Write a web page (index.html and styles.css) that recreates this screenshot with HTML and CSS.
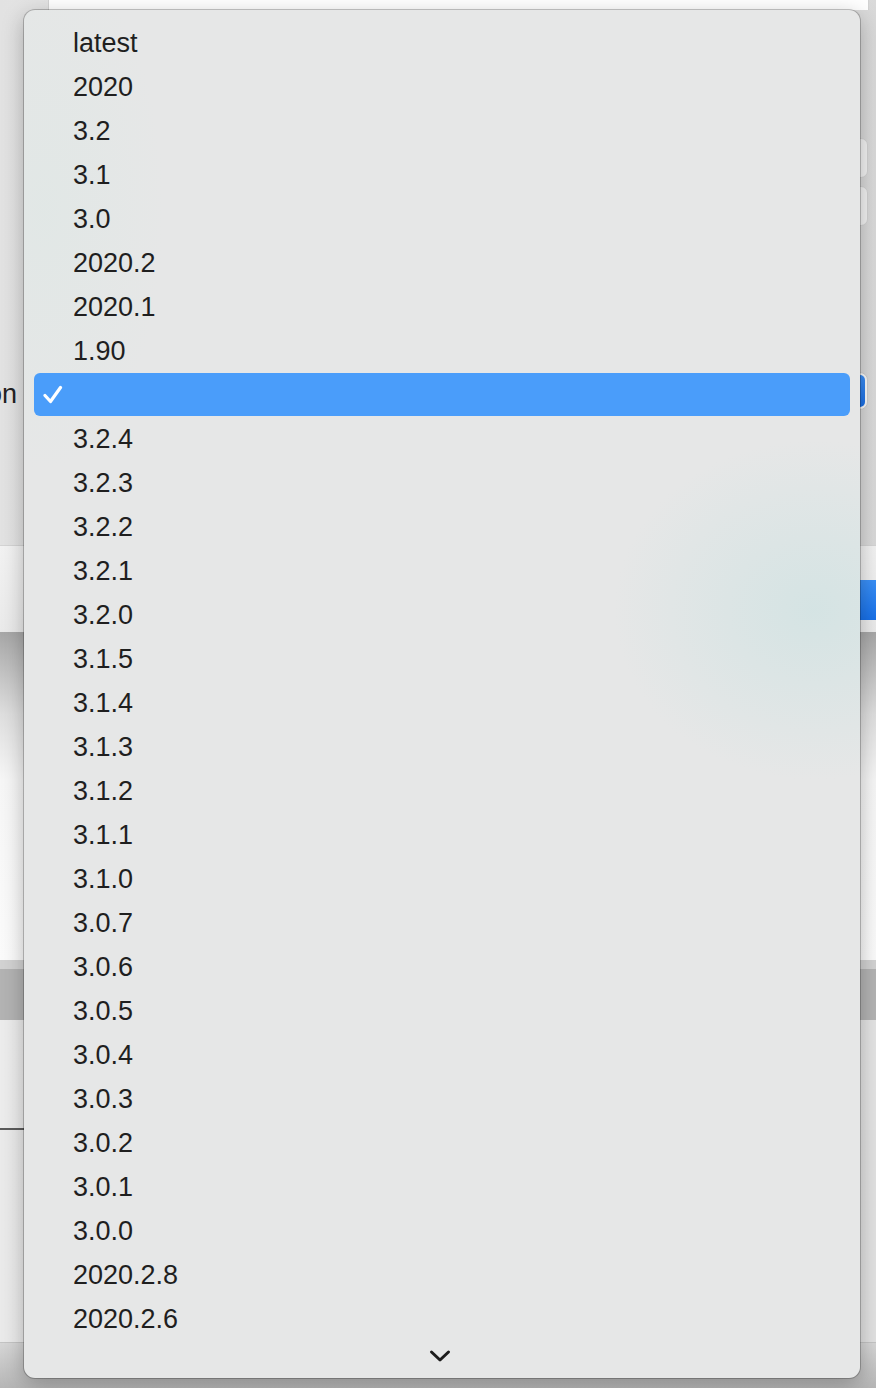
FILE: index.html
```html
<!DOCTYPE html>
<html lang="en">
<head>
<meta charset="utf-8">
<title>Version menu</title>
<link rel="stylesheet" href="styles.css">
</head>
<body>
<div class="window">
  <div class="top-panel"></div>
  <div class="form">
    <div class="field"></div>
    <div class="field"></div>
    <div class="popup-row">
      <div class="label"><span>Version</span></div>
      <div class="popup"><div class="popup-arrow"></div></div>
    </div>
  </div>
  <div class="footer"><div class="primary-btn"></div></div>
</div>
<div class="desk">
  <div class="shade"></div>
  <div class="band"></div>
  <div class="pane"><div class="pane-left"></div></div>
  <div class="pane2"></div>
  <div class="bottom"></div>
</div>

<div class="menu">
  <div class="item">latest</div>
  <div class="item">2020</div>
  <div class="item">3.2</div>
  <div class="item">3.1</div>
  <div class="item">3.0</div>
  <div class="item">2020.2</div>
  <div class="item">2020.1</div>
  <div class="item">1.90</div>
  <div class="item selected">
    <svg class="check" width="22" height="20" viewBox="0 0 22 20"><path d="M2 10.5 L7.5 16.5 L17.5 2.5" fill="none" stroke="#fff" stroke-width="3.2" stroke-linecap="round" stroke-linejoin="round"/></svg>
  </div>
  <div class="item">3.2.4</div>
  <div class="item">3.2.3</div>
  <div class="item">3.2.2</div>
  <div class="item">3.2.1</div>
  <div class="item">3.2.0</div>
  <div class="item">3.1.5</div>
  <div class="item">3.1.4</div>
  <div class="item">3.1.3</div>
  <div class="item">3.1.2</div>
  <div class="item">3.1.1</div>
  <div class="item">3.1.0</div>
  <div class="item">3.0.7</div>
  <div class="item">3.0.6</div>
  <div class="item">3.0.5</div>
  <div class="item">3.0.4</div>
  <div class="item">3.0.3</div>
  <div class="item">3.0.2</div>
  <div class="item">3.0.1</div>
  <div class="item">3.0.0</div>
  <div class="item">2020.2.8</div>
  <div class="item">2020.2.6</div>
  <div class="scroll-down">
    <svg width="22" height="14" viewBox="0 0 22 14"><path d="M2.5 3 L11 11 L19.5 3" fill="none" stroke="#1c1c1c" stroke-width="3" stroke-linecap="round" stroke-linejoin="round"/></svg>
  </div>
</div>
</body>
</html>
```

FILE: styles.css
```css
html, body {
  margin: 0;
  padding: 0;
}
body {
  width: 876px;
  height: 1388px;
  overflow: hidden;
  position: relative;
  background: #d6d6d6;
  font-family: "Liberation Sans", Arial, sans-serif;
}

/* background window */
.window {
  height: 632px;
  display: flex;
  flex-direction: column;
  background: linear-gradient(to right, #e2e2e2, #ececec 40%, #e4e4e4 85%, #d9d9d9);
}
.top-panel {
  margin-left: 48px;
  width: 819px;
  height: 10px;
  flex: none;
  background: #fff;
  border-left: 1px solid #d2d2d2;
  border-right: 1px solid #d2d2d2;
}
.form {
  flex: 1;
  display: flex;
  flex-direction: column;
  align-items: flex-end;
  padding: 128px 8px 0 0;
  gap: 8px;
}
.field {
  width: 320px;
  height: 40px;
  box-sizing: border-box;
  background: #f3f3f3;
  border: 1px solid #d3d3d3;
  border-radius: 7px;
}
.popup-row {
  margin-top: 138px;
  align-self: stretch;
  display: flex;
  align-items: center;
  justify-content: space-between;
}
.label {
  width: 17px;
  padding-top: 6px;
  display: flex;
  justify-content: flex-end;
  font-size: 27px;
  color: #222;
  white-space: nowrap;
}
.popup {
  width: 320px;
  height: 38px;
  box-sizing: border-box;
  padding: 2px;
  display: flex;
  justify-content: flex-end;
  background: #fbfbfb;
  border: 1px solid #cfcfcf;
  border-radius: 8px;
}
.popup-arrow {
  width: 32px;
  border-radius: 5px;
  background: linear-gradient(#3b8ef6, #1a6fe6);
}
.footer {
  height: 87px;
  flex: none;
  border-top: 1px solid #d4d4d4;
  background: linear-gradient(#f2f2f2, #eaeaea);
  display: flex;
  justify-content: flex-end;
  align-items: flex-start;
  padding-top: 34px;
  box-sizing: border-box;
  margin-right: -40px;
}
.primary-btn {
  width: 120px;
  height: 40px;
  border-radius: 7px;
  background: linear-gradient(#3a8ff6, #1870e8);
}

/* desktop area behind */
.desk {
  display: flex;
  flex-direction: column;
  height: 756px;
}
.shade {
  height: 328px;
  background: linear-gradient(#a7a7a7, #dedede 25%, #f6f6f6 45%, #fbfbfb);
}
.band {
  height: 51px;
  border-top: 9px solid #d2d2d2;
  background: #b3b3b3;
}
.pane {
  height: 110px;
  background: linear-gradient(to right, #ececec, #e4e4e4);
}
.pane-left {
  width: 400px;
  height: 108px;
  border-bottom: 2px solid #5b5b5b;
}
.pane2 {
  height: 212px;
  background: linear-gradient(to right, #eaeaea, #e2e2e2);
  border-bottom: 1px solid #c4c4c4;
}
.bottom {
  flex: 1;
  background: linear-gradient(#d6d6d6, #b6b6b6);
}

/* popup menu */
.menu {
  position: absolute;
  left: 24px;
  top: 10px;
  width: 836px;
  height: 1368px;
  box-sizing: border-box;
  padding: 11px 10px 7px;
  border-radius: 11px;
  background:
    radial-gradient(ellipse 200px 170px at 790px 600px, rgba(205, 226, 226, 0.7), rgba(214, 230, 230, 0) 100%),
    radial-gradient(ellipse 120px 260px at 20px 200px, rgba(218, 232, 228, 0.4), rgba(218, 232, 228, 0) 100%),
    #e6e7e7;
  box-shadow: 0 0 0 1px rgba(0, 0, 0, 0.22), 0 6px 22px rgba(0, 0, 0, 0.28);
  display: flex;
  flex-direction: column;
}
.item {
  height: 44px;
  flex: none;
  padding-left: 39px;
  font-size: 27px;
  line-height: 44px;
  color: #1f1f1f;
  display: flex;
  align-items: center;
}
.item.selected {
  position: relative;
  background: #4a9dfa;
  border-radius: 6px;
  height: 43px;
  margin-bottom: 1px;
}
.check {
  position: absolute;
  left: 9px;
  top: 12px;
}
.scroll-down {
  height: 30px;
  flex: none;
  display: flex;
  justify-content: center;
  align-items: center;
  padding-right: 4px;
}
```
